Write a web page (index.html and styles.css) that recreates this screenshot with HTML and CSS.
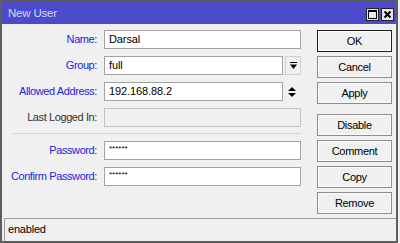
FILE: index.html
```html
<!DOCTYPE html>
<html>
<head>
<meta charset="utf-8">
<link rel="stylesheet" href="styles.css">
</head>
<body>
<div class="window">
  <div class="titlebar">
    <span class="title">New User</span>
    <div class="tbtns">
      <span class="tbtn"><svg width="11" height="11" viewBox="0 0 11 11"><rect x="1.5" y="1.5" width="8" height="8" fill="none" stroke="#000" stroke-width="1"/><rect x="1.5" y="1.5" width="8" height="1.5" fill="#000"/></svg></span>
      <span class="tbtn"><svg width="11" height="11" viewBox="0 0 11 11"><path d="M2.5 2.5 L8.5 8.5 M8.5 2.5 L2.5 8.5" stroke="#000" stroke-width="2"/></svg></span>
    </div>
  </div>
  <div class="body">
    <div class="form">
      <label class="lbl blue">Name:</label>
      <div class="field"><div class="input">Darsal</div></div>

      <label class="lbl blue">Group:</label>
      <div class="field"><div class="input short">full</div><span class="ddbtn"><svg width="7" height="8" viewBox="0 0 7 8"><rect x="0" y="0" width="7" height="1" fill="#000"/><path d="M0 2.5 H7 L3.5 7 Z" fill="#000"/></svg></span></div>

      <label class="lbl blue">Allowed Address:</label>
      <div class="field"><div class="input short">192.168.88.2</div><span class="updown"><svg width="8" height="12" viewBox="0 0 8 12"><path d="M0 5 L4 1 L8 5 Z M0 7 L8 7 L4 11 Z" fill="#000"/></svg></span></div>

      <label class="lbl">Last Logged In:</label>
      <div class="field"><div class="input disabled"></div></div>

      <div class="sep"></div>

      <label class="lbl blue">Password:</label>
      <div class="field"><div class="input pw">******</div></div>

      <label class="lbl blue">Confirm Password:</label>
      <div class="field"><div class="input pw">******</div></div>
    </div>
    <div class="buttons">
      <button class="btn default">OK</button>
      <button class="btn">Cancel</button>
      <button class="btn">Apply</button>
      <button class="btn gap">Disable</button>
      <button class="btn">Comment</button>
      <button class="btn">Copy</button>
      <button class="btn">Remove</button>
    </div>
  </div>
  <div class="status"><div class="statbox">enabled</div></div>
</div>
</body>
</html>
```
FILE: styles.css
```css
* { box-sizing: border-box; }
html, body { margin: 0; padding: 0; background: #f0f0f0; }
body {
  font-family: "Liberation Sans", Arial, sans-serif;
  font-size: 11px;
  color: #000;
}
.window {
  width: 398px;
  height: 243px;
  border: 2px solid #5e5e5e;
  border-top-width: 1px;
  background: #f0f0f0;
  display: flex;
  flex-direction: column;
}
.titlebar {
  height: 23px;
  background: #4b4bcb;
  display: flex;
  align-items: center;
  justify-content: space-between;
  padding: 0 2px 0 6px;
}
.title {
  color: #d8d8f6;
  font-size: 11.5px;
  letter-spacing: -0.2px;
}
.tbtns { display: flex; gap: 2px; margin-top: 3px; }
.tbtn {
  width: 13px;
  height: 13px;
  border: 1px solid #222;
  background: #e8e8e8;
  display: flex;
  align-items: center;
  justify-content: center;
}
.tbtn svg { display: block; }
.body {
  height: 194px;
  display: flex;
  padding-top: 6px;
}
.form {
  display: grid;
  grid-template-columns: 95px 197px;
  column-gap: 7px;
  row-gap: 7px;
  align-content: start;
  width: 299px;
}
.lbl {
  text-align: right;
  line-height: 19px;
  height: 19px;
  letter-spacing: -0.4px;
  color: #333;
  white-space: nowrap;
}
.lbl.blue { color: #2222e0; }
.field { display: flex; align-items: center; height: 19px; }
.input {
  width: 197px;
  height: 19px;
  background: #fff;
  border: 1px solid #a3a3a3;
  padding: 0 4px;
  line-height: 17px;
  font-size: 11px;
  color: #000;
  letter-spacing: -0.1px;
}
.input.short { width: 179px; }
.input.disabled { background: #f0f0f0; border-color: #c4c4c4; }
.input.pw { font-size: 8px; letter-spacing: 0; line-height: 13px; }
.ddbtn {
  margin-left: 2px;
  width: 16px;
  height: 19px;
  display: flex;
  align-items: center;
  justify-content: center;
  border: 1px solid #d0d0d0;
}
.updown {
  width: 18px;
  height: 19px;
  display: flex;
  align-items: center;
  justify-content: center;
}
.sep {
  grid-column: 1 / 3;
  height: 1px;
  margin: -1px 0 0 10px;
  background: #d4d4d4;
}
.buttons {
  margin-left: 16px;
  display: flex;
  flex-direction: column;
  gap: 4px;
}
.btn {
  width: 75px;
  height: 22px;
  margin: 0;
  padding: 0;
  font-family: "Liberation Sans", Arial, sans-serif;
  font-size: 11px;
  letter-spacing: -0.3px;
  color: #000;
  background: #f0f0f0;
  border: 1px solid #8c8c8c;
  box-shadow: inset 0 0 0 1px #fbfbfb;
}
.btn.default { border-color: #1e1e1e; }
.btn.gap { margin-top: 6px; }
.status {
  flex: 1;
  padding: 0 0 0 2px;
}
.statbox {
  height: 100%;
  border-top: 1px solid #9d9d9d;
  border-left: 1px solid #9d9d9d;
  padding: 3px 0 0 3px;
  line-height: 14px;
  letter-spacing: -0.2px;
}
```
